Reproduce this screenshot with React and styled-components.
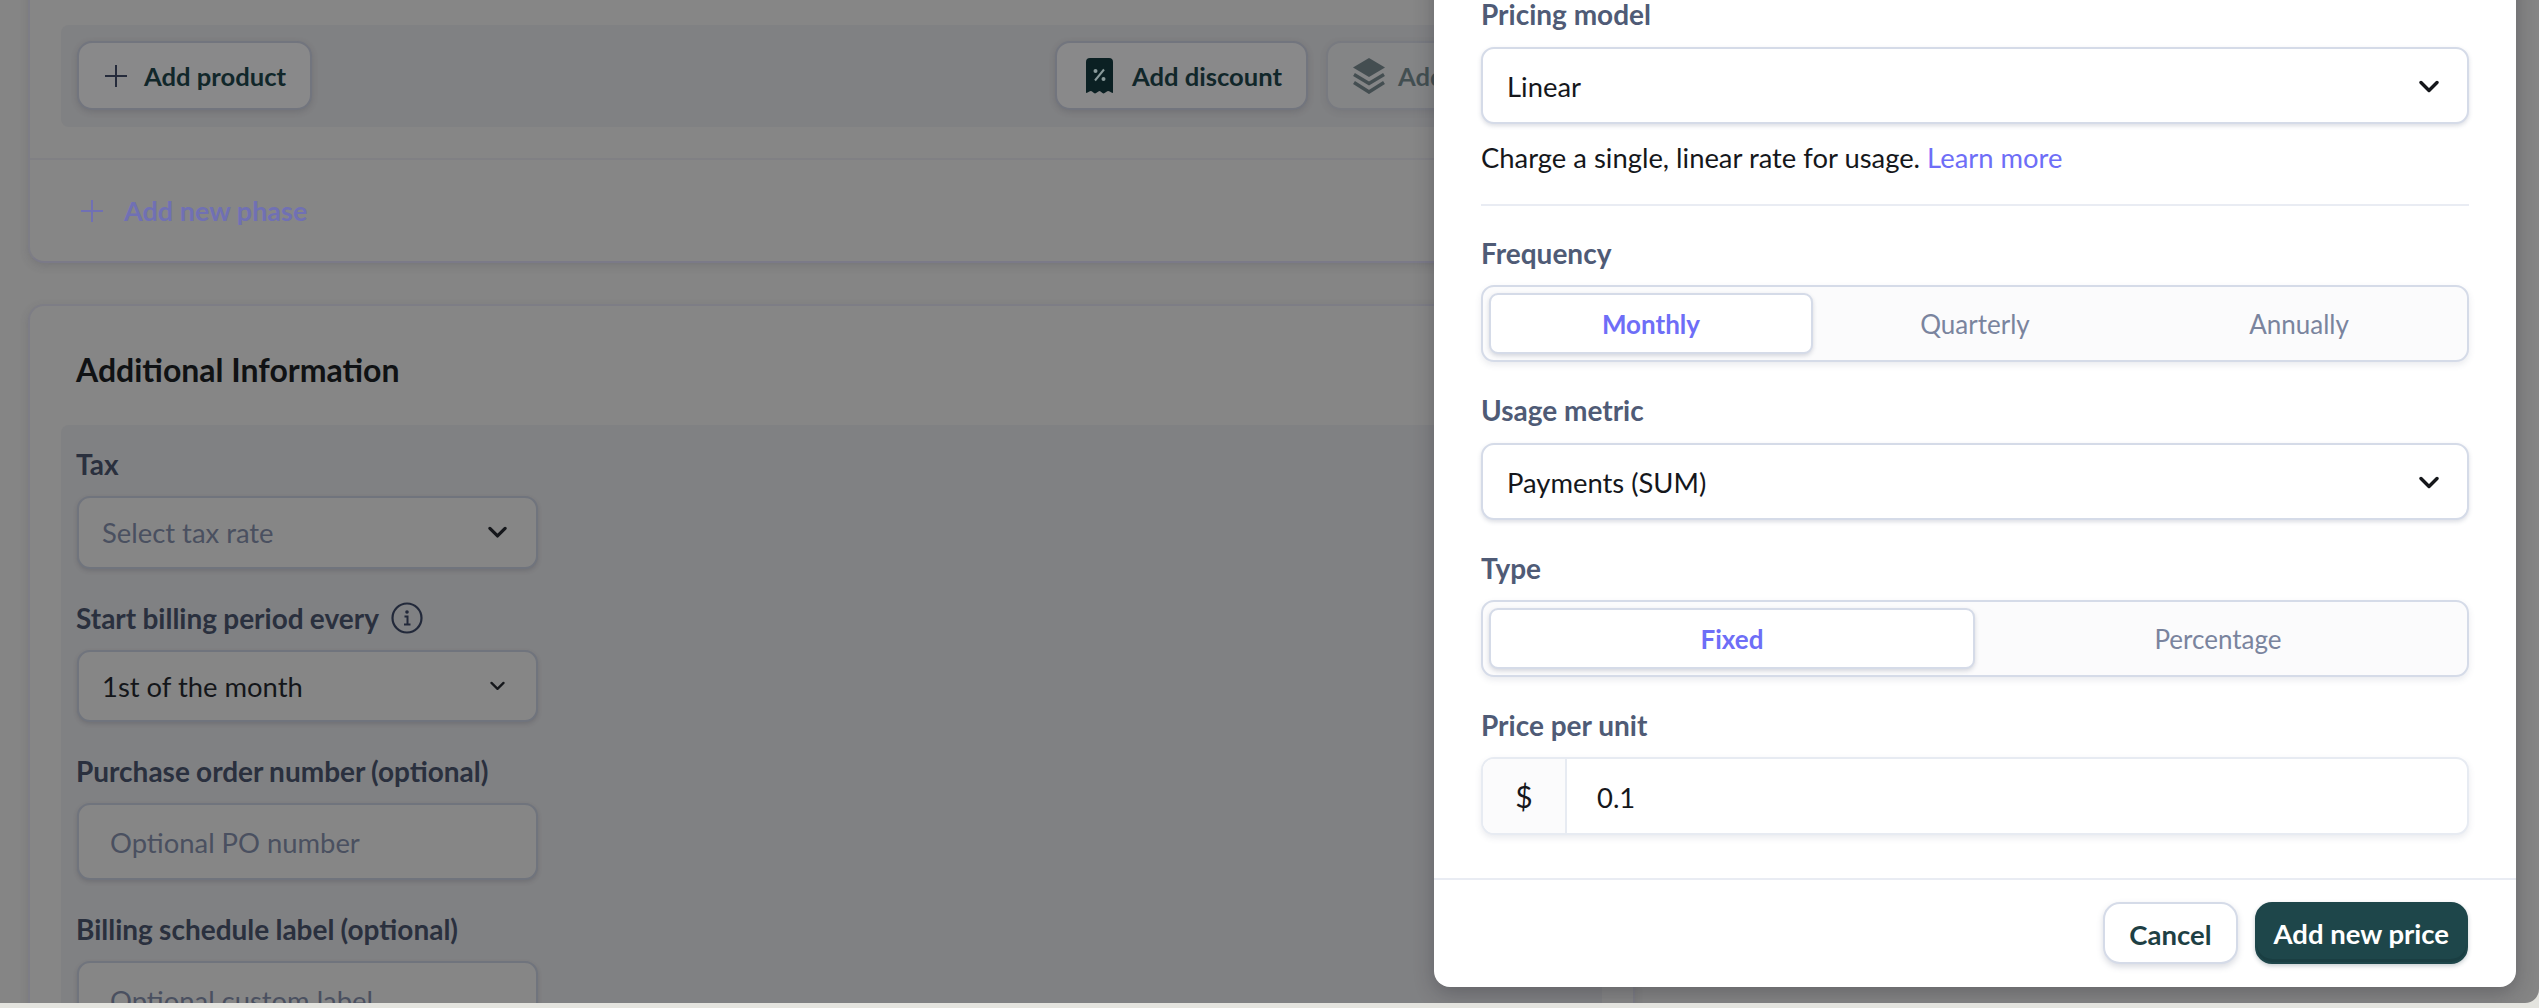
import React from "react";
import styled, { createGlobalStyle } from "styled-components";

const GlobalStyle = createGlobalStyle`
  html, body {
    margin: 0;
    padding: 0;
    background: #e4e4df;
    overflow: hidden;
  }
  * {
    box-sizing: border-box;
  }
`;

const Page = styled.div`
  position: relative;
  width: 2539px;
  height: 1003px;
  overflow: hidden;
  background: #858585;
  border-bottom-right-radius: 14px;
  font-family: Lato, "Noto Sans", sans-serif;
  font-size: 27.4px;
`;

const Column = styled.div`
  width: 1607px;
  margin-left: 28px;
  display: flex;
  flex-direction: column;
  gap: 41px;
`;

const Card = styled.section`
  background: #868686;
  border: 2px solid #7d7d85;
  border-top-width: ${(p) => (p.$cut ? 0 : 2)}px;
  border-bottom-color: #7b7a88;
  border-radius: 16px;
  box-shadow: 0 3px 8px rgba(60, 60, 70, 0.18);
  margin-top: ${(p) => (p.$cut ? -30 : 0)}px;
  overflow: hidden;
`;

const Tray = styled.div`
  margin: 55px 31px 31px;
  height: 102px;
  padding: 16px;
  background: #808183;
  border-radius: 8px;
  display: flex;
  justify-content: space-between;
`;

const TrayGroup = styled.div`
  display: flex;
  gap: 18px;
`;

const GhostButton = styled.button`
  height: 69px;
  min-width: ${(p) => p.$w || 0}px;
  padding: 0 ${(p) => p.$right || 24}px 0 ${(p) => p.$left || 26}px;
  display: flex;
  align-items: center;
  gap: ${(p) => p.$gap || 17}px;
  background: #89898a;
  border: 2px solid #72757e;
  border-radius: 15px;
  box-shadow: 0 2px 6px rgba(50, 50, 60, 0.2);
  color: #11272a;
  font: 700 25.6px Lato, sans-serif;
  opacity: ${(p) => (p.$muted ? 0.55 : 1)};
`;

const PhaseRow = styled.div`
  border-top: 2px solid #808084;
  height: 103px;
  padding: 0 0 0 51px;
  display: flex;
  align-items: center;
  gap: 21px;
  color: #7070b4;
  font-size: 27px;
  font-weight: 700;
`;

const CardTitle = styled.h2`
  margin: 0;
  padding: 44px 0 0 46px;
  height: 119px;
  color: #101214;
  font-size: 32px;
  line-height: 40px;
  font-weight: 700;
`;

const FormTray = styled.div`
  margin: 0 31px;
  padding: 22px 16px 0 15px;
  height: 600px;
  background: #808183;
  border-radius: 8px 8px 0 0;
  width: 1541px;
`;

const SideField = styled.div`
  width: 462px;
  margin-bottom: 32px;
`;

const SideLabel = styled.label`
  display: flex;
  align-items: center;
  gap: 12px;
  height: 34px;
  margin-bottom: 15px;
  color: #2a303e;
  font-size: 28px;
  font-weight: 700;
  word-spacing: -0.6px;
`;

const SideControl = styled.div`
  height: ${(p) => p.$h || 73}px;
  margin-left: 1px;
  padding: ${(p) => (p.$input ? 2 : 0)}px 29px 0 ${(p) => (p.$input ? 31 : 23)}px;
  display: flex;
  align-items: center;
  justify-content: space-between;
  background: #868686;
  border: 2px solid #70747d;
  border-radius: 13px;
  box-shadow: 0 2px 4px rgba(50, 50, 60, 0.2);
  color: ${(p) => (p.$placeholder ? "#4a5060" : "#14161a")};
`;

const ChevronSlot = styled.span`
  width: 19px;
  display: flex;
  justify-content: center;
`;

const Modal = styled.aside`
  position: absolute;
  right: 23px;
  bottom: 16px;
  width: 1082px;
  padding-top: 40px;
  background: #ffffff;
  border-radius: 16px;
  box-shadow: 0 6px 20px rgba(30, 30, 40, 0.3);
`;

const ModalBody = styled.div`
  padding: 0 47px 43px;
`;

const Label = styled.label`
  display: block;
  height: 34px;
  line-height: 31px;
  margin: ${(p) => p.$top ?? 33}px 0 ${(p) => p.$bottom || 13}px;
  color: #4f5b76;
  font-size: 28px;
  font-weight: 700;
`;

const Select = styled.div`
  height: 77px;
  padding: 1px 28px 0 24px;
  display: flex;
  align-items: center;
  justify-content: space-between;
  background: #fff;
  border: 2px solid #d5dbe8;
  border-radius: 13px;
  box-shadow: 0 2px 4px rgba(80, 90, 120, 0.2);
  color: #15171b;
`;

const Help = styled.p`
  margin: 17px 0 29px;
  height: 34px;
  line-height: 34px;
  color: #15171b;
`;

const Link = styled.a`
  color: #6e6ef7;
`;

const Rule = styled.hr`
  margin: 0;
  border: 0;
  height: 2px;
  background: #e9ecf3;
`;

const Segmented = styled.div`
  height: 77px;
  padding: 6px;
  display: flex;
  background: #fbfbfc;
  border: 2px solid #d5dbe8;
  border-radius: 13px;
  box-shadow: 0 3px 6px rgba(80, 90, 120, 0.12);
`;

const Segment = styled.div`
  flex: 1;
  display: flex;
  align-items: center;
  justify-content: center;
  border: 2px solid ${(p) => (p.$active ? "#d5dbe8" : "transparent")};
  border-radius: 9px;
  background: ${(p) => (p.$active ? "#fff" : "transparent")};
  box-shadow: ${(p) => (p.$active ? "0 2px 4px rgba(80, 90, 120, 0.22)" : "none")};
  color: ${(p) => (p.$active ? "#6e6ef7" : "#7a849e")};
  font-size: 26px;
  font-weight: ${(p) => (p.$active ? 700 : 400)};
`;

const PriceInput = styled.div`
  height: 78px;
  display: flex;
  background: #fff;
  border: 2px solid #e7ebf2;
  border-radius: 13px;
  box-shadow: 0 3px 6px rgba(80, 90, 120, 0.12);
  overflow: hidden;
  color: #15171b;
`;

const Prefix = styled.div`
  width: 84px;
  display: flex;
  align-items: center;
  justify-content: center;
  background: #fbfbfc;
  border-right: 2px solid #e7ebf2;
  font-size: 30px;
`;

const PriceValue = styled.div`
  display: flex;
  align-items: center;
  padding: 2px 0 0 30px;
`;

const Footer = styled.footer`
  padding: 22px 48px 23px 0;
  display: flex;
  justify-content: flex-end;
  gap: 17px;
  border-top: 2px solid #e9ecf3;
`;

const FooterButton = styled.button`
  height: 62px;
  padding: ${(p) => (p.$primary ? 0 : 2)}px ${(p) => (p.$primary ? 17 : 24)}px 0;
  border: 2px solid ${(p) => (p.$primary ? "#1e464a" : "#d5dbe8")};
  border-radius: 17px;
  background: ${(p) => (p.$primary ? "#1e464a" : "#fff")};
  box-shadow: ${(p) =>
    p.$primary ? "inset 0 -3px 0 #1a3e42, 0 2px 4px rgba(30,60,70,.25)" : "0 3px 6px rgba(80, 90, 120, 0.22)"};
  color: ${(p) => (p.$primary ? "#fff" : "#1e3f44")};
  font: 700 27.5px Lato, sans-serif;
`;

const Chevron = ({ w = 20, color = "#15171b", sw = 3.4 }) => (
  <svg width={w} height={w * 0.65} viewBox="0 0 20 13" fill="none">
    <path d="M2 2.5 10 10.5 18 2.5" stroke={color} strokeWidth={sw} strokeLinecap="round" strokeLinejoin="round" />
  </svg>
);

const Plus = ({ color }) => (
  <svg width="22" height="22" viewBox="0 0 22 22" fill="none">
    <path d="M11 0v22M0 11h22" stroke={color} strokeWidth="2" />
  </svg>
);

const ReceiptIcon = () => (
  <svg width="27" height="36" viewBox="0 0 27 36">
    <path
      d="M4 0h19a4 4 0 0 1 4 4v31c-2.500-.5-3.500-2-5-2s-3 2.500-4.500 2.500S15 33 13.500 33 10.500 35.500 9 35.500 6.500 33 5 33s-2.500 1.500-5 2V4a4 4 0 0 1 4-4z"
      fill="#0b2023"
    />
    <circle cx="9.500" cy="13" r="2" fill="#8a9a9b" />
    <circle cx="17.500" cy="21" r="2" fill="#8a9a9b" />
    <path d="M18 11.500 9 22.500" stroke="#8a9a9b" strokeWidth="2" />
  </svg>
);

const StackIcon = () => (
  <svg width="32" height="36" viewBox="0 0 32 36">
    <path d="M16 0 32 9.500 16 19 0 9.500z" fill="#14262a" />
    <path d="M1 16.500 16 25.500 31 16.500M1 24.500 16 34 31 24.500" fill="none" stroke="#14262a" strokeWidth="3.500" />
  </svg>
);

const InfoIcon = () => (
  <svg width="32" height="32" viewBox="0 0 32 32" fill="none">
    <circle cx="16" cy="16" r="14.500" stroke="#22293a" strokeWidth="2.200" />
    <circle cx="16" cy="10" r="1.800" fill="#22293a" />
    <path d="M13.500 14.500H16.500V22M13 22.500H19.500" stroke="#22293a" strokeWidth="2" />
  </svg>
);

export default function App() {
  return (
    <>
      <GlobalStyle />
      <Page>
        <Column>
          <Card $cut>
            <Tray>
              <GhostButton>
                <Plus color="#252b3b" />
                Add product
              </GhostButton>
              <TrayGroup>
                <GhostButton $left={29} $gap={19}>
                  <ReceiptIcon />
                  Add discount
                </GhostButton>
                <GhostButton $w={260} $left={25} $muted $gap={13}>
                  <StackIcon />
                  Add bundle
                </GhostButton>
              </TrayGroup>
            </Tray>
            <PhaseRow>
              <Plus color="#7070b4" />
              Add new phase
            </PhaseRow>
          </Card>
          <Card>
            <CardTitle>Additional Information</CardTitle>
            <FormTray>
              <SideField>
                <SideLabel>Tax</SideLabel>
                <SideControl $placeholder>
                  Select tax rate
                  <ChevronSlot>
                    <Chevron w={19} />
                  </ChevronSlot>
                </SideControl>
              </SideField>
              <SideField>
                <SideLabel>
                  Start billing period every
                  <InfoIcon />
                </SideLabel>
                <SideControl $h={72}>
                  1st of the month
                  <ChevronSlot>
                    <Chevron w={15} sw={3} />
                  </ChevronSlot>
                </SideControl>
              </SideField>
              <SideField>
                <SideLabel>Purchase order number (optional)</SideLabel>
                <SideControl $input $h={77} $placeholder>
                  Optional PO number
                </SideControl>
              </SideField>
              <SideField>
                <SideLabel>Billing schedule label (optional)</SideLabel>
                <SideControl $input $h={77} $placeholder>
                  Optional custom label
                </SideControl>
              </SideField>
            </FormTray>
          </Card>
        </Column>
        <Modal>
          <ModalBody>
            <Label $top={0} $bottom={14}>
              Pricing model
            </Label>
            <Select>
              Linear
              <Chevron />
            </Select>
            <Help>
              Charge a single, linear rate for usage. <Link>Learn more</Link>
            </Help>
            <Rule />
            <Label $top={32}>Frequency</Label>
            <Segmented>
              <Segment $active>Monthly</Segment>
              <Segment>Quarterly</Segment>
              <Segment>Annually</Segment>
            </Segmented>
            <Label $bottom={14}>Usage metric</Label>
            <Select>
              Payments (SUM)
              <Chevron />
            </Select>
            <Label>Type</Label>
            <Segmented>
              <Segment $active>Fixed</Segment>
              <Segment>Percentage</Segment>
            </Segmented>
            <Label>Price per unit</Label>
            <PriceInput>
              <Prefix>$</Prefix>
              <PriceValue>0.1</PriceValue>
            </PriceInput>
          </ModalBody>
          <Footer>
            <FooterButton>Cancel</FooterButton>
            <FooterButton $primary>Add new price</FooterButton>
          </Footer>
        </Modal>
      </Page>
    </>
  );
}
